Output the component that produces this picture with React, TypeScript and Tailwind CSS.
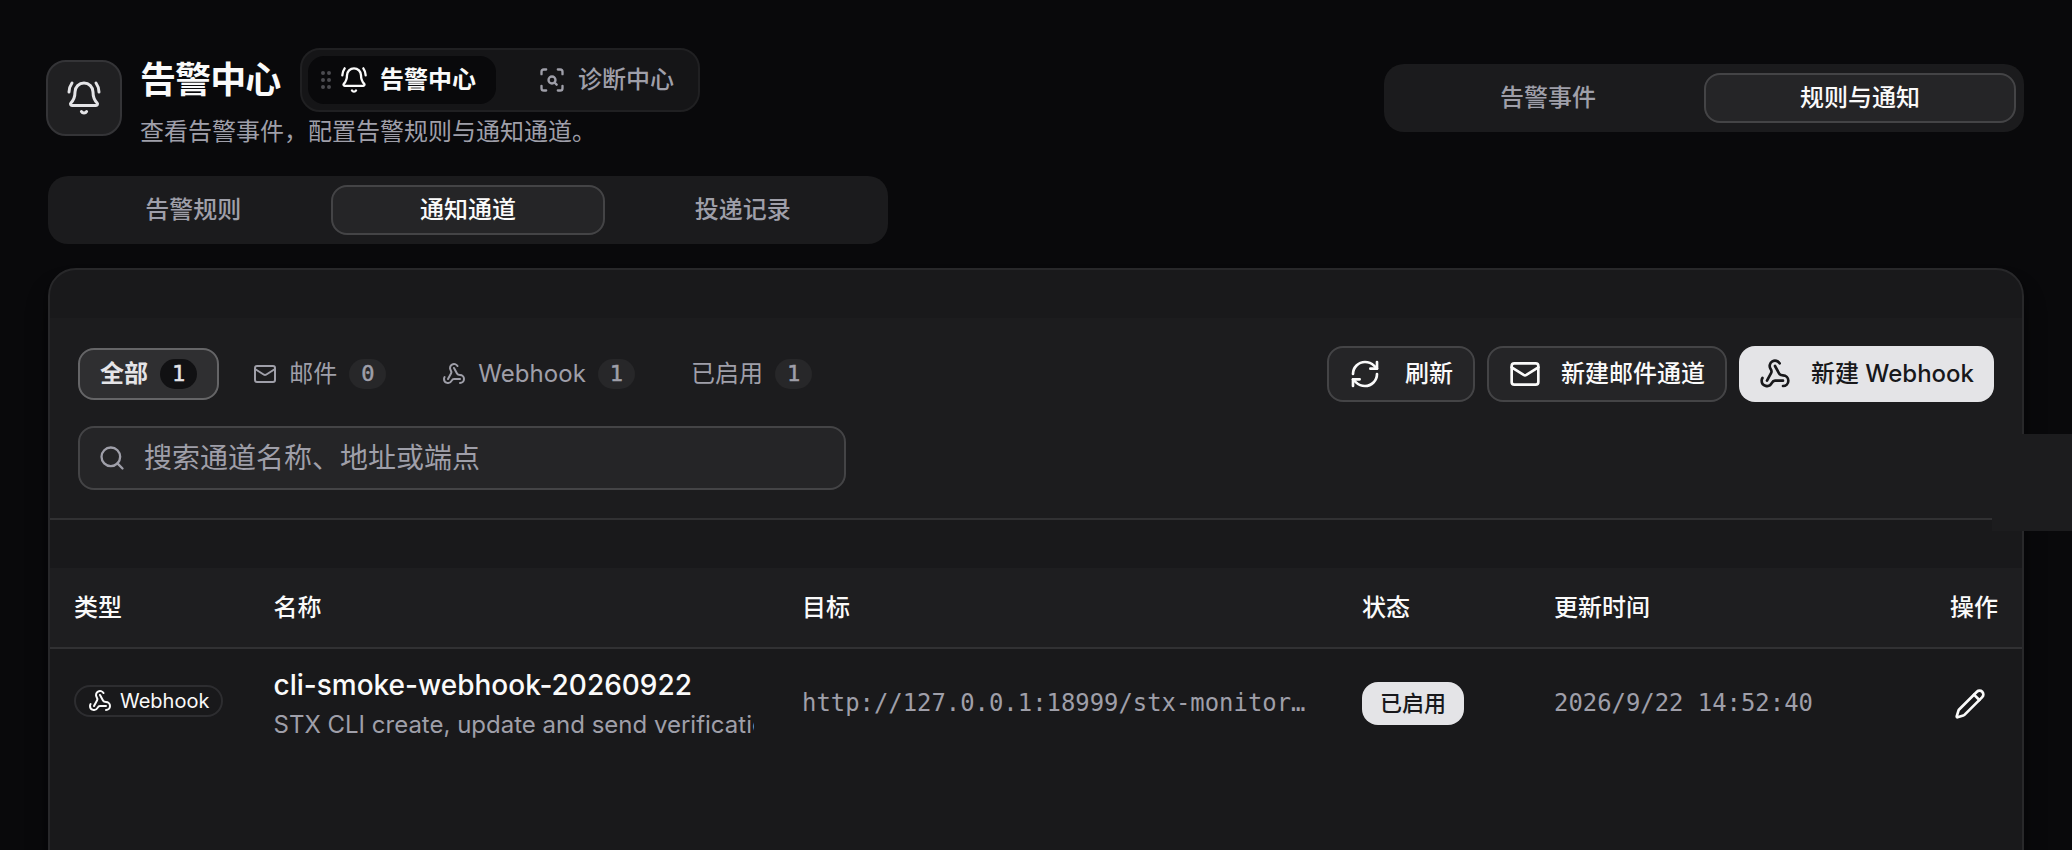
import React from 'react';
import { BellRing, GripVertical, Mail, Pencil, RefreshCw, ScanSearch, Search, Webhook } from 'lucide-react';

const filters = [
  { label: '全部', count: 1, icon: null, active: true },
  { label: '邮件', count: 0, icon: Mail, active: false },
  { label: 'Webhook', count: 1, icon: Webhook, active: false },
  { label: '已启用', count: 1, icon: null, active: false },
];

const channels = [
  {
    type: 'Webhook',
    name: 'cli-smoke-webhook-20260922',
    description: 'STX CLI create, update and send verification',
    target: 'http://127.0.0.1:18999/stx-monitor…',
    status: '已启用',
    updatedAt: '2026/9/22 14:52:40',
  },
];

const TabBar = ({ tabs, active, className }: { tabs: string[]; active: string; className: string }) => (
  <div className={`flex h-[68px] items-center rounded-[20px] bg-[#1b1b1d] px-2 ${className}`}>
    {tabs.map((tab) => (
      <button
        key={tab}
        className={`h-[50px] flex-1 rounded-[16px] border-2 text-[24px] leading-none font-medium ${
          tab === active ? 'border-[#444446] bg-[#252527] text-[#fafafa]' : 'border-transparent text-[#9f9fa9]'
        }`}
      >
        {tab}
      </button>
    ))}
  </div>
);

const Header = () => (
  <header className="flex items-start justify-between pr-12 pl-[46px]">
    <div className="flex">
      <div className="mt-3 flex h-[76px] w-[76px] items-center justify-center rounded-[20px] border-2 border-[#343437] bg-[#202022]">
        <BellRing className="h-9 w-9 text-[#e4e4e7]" />
      </div>
      <div className="ml-[18px]">
        <div className="flex items-center">
          <h1 className="w-[160px] text-[36px] leading-[64px] font-bold tracking-tight text-[#fafafa]">告警中心</h1>
          <div className="flex h-16 w-[400px] items-center rounded-[20px] border-2 border-[#202022] bg-[#151517] p-1.5">
            <button className="flex h-12 items-center rounded-[16px] bg-[#09090b] pr-5 pl-1.5 text-[24px] leading-none font-semibold text-[#fafafa]">
              <GripVertical className="h-6 w-6 text-[#4b4b50]" />
              <BellRing className="ml-0.5 h-7 w-7" />
              <span className="ml-3">告警中心</span>
            </button>
            <button className="flex h-12 items-center pl-[42px] text-[24px] leading-none font-medium text-[#9f9fa9]">
              <ScanSearch className="h-7 w-7" />
              <span className="ml-3">诊断中心</span>
            </button>
          </div>
        </div>
        <p className="mt-0.5 text-[24px] leading-9 text-[#9f9fa9]">查看告警事件，配置告警规则与通知通道。</p>
      </div>
    </div>
    <TabBar tabs={['告警事件', '规则与通知']} active="规则与通知" className="mt-4 w-[640px]" />
  </header>
);

const Toolbar = () => (
  <div className="h-[202px] border-b-2 border-[#313133] bg-[#1c1c1e] px-7 pt-7">
    <div className="flex h-14 items-center justify-between">
      <div className="flex gap-3">
        {filters.map(({ label, count, icon: Icon, active }) => (
          <button
            key={label}
            className={`flex h-[52px] items-center gap-3 rounded-[16px] border-2 px-5 text-[24px] leading-none ${
              active ? 'border-[#656567] bg-[#2f2f31] font-semibold text-[#e4e4e7]' : 'border-transparent text-[#9f9fa9]'
            }`}
          >
            {Icon && <Icon className="h-6 w-6" />}
            <span className="tracking-[0.06px]">{label}</span>
            <span
              className={`flex h-[30px] w-[37px] items-center justify-center rounded-full font-['DejaVu_Sans_Mono',monospace] text-[22px] font-medium [-webkit-text-stroke:0.5px_currentColor] ${
                active ? 'bg-[#111113]' : 'bg-[#272729]'
              }`}
            >
              {count}
            </span>
          </button>
        ))}
      </div>
      <div className="flex gap-3 text-[24px] leading-none font-medium text-[#fafafa]">
        <button className="flex h-14 items-center gap-6 rounded-[16px] border-2 border-[#444446] bg-[#252527] px-5">
          <RefreshCw className="h-8 w-8" />
          刷新
        </button>
        <button className="flex h-14 items-center gap-5 rounded-[16px] border-2 border-[#444446] bg-[#252527] px-5">
          <Mail className="h-8 w-8" />
          新建邮件通道
        </button>
        <button className="flex h-14 items-center gap-5 rounded-[16px] bg-[#e4e4e7] px-5 text-[#18181b]">
          <Webhook className="h-8 w-8" />
          新建 Webhook
        </button>
      </div>
    </div>
    <div className="mt-6 flex h-16 w-[768px] items-center rounded-[16px] border-2 border-[#444446] bg-[#252527] pl-[18px] text-[#9f9fa9]">
      <Search className="h-7 w-7" />
      <span className="ml-[18px] text-[28px] leading-none">搜索通道名称、地址或端点</span>
    </div>
  </div>
);

const ChannelTable = () => (
  <table className="w-full table-fixed text-left">
    <colgroup>
      <col className="w-[199.5px]" />
      <col className="w-[528.5px]" />
      <col className="w-[560px]" />
      <col className="w-[192px]" />
      <col />
      <col className="w-[200px]" />
    </colgroup>
    <thead>
      <tr className="h-[80px] border-b-2 border-[#313133] bg-[#1e1e20] text-[24px] text-[#fafafa]">
        <th className="px-6 font-medium">类型</th>
        <th className="px-6 font-medium">名称</th>
        <th className="px-6 font-medium">目标</th>
        <th className="px-6 font-medium">状态</th>
        <th className="px-6 font-medium">更新时间</th>
        <th className="px-6 text-right font-medium">操作</th>
      </tr>
    </thead>
    <tbody>
      {channels.map((channel) => (
        <tr key={channel.name} className="h-[110px]">
          <td className="px-6 pb-1.5">
            <span className="flex h-8 w-[149px] items-center gap-2 rounded-full border-2 border-[#2d2d30] pl-3 text-[20px] leading-none text-[#fafafa]">
              <Webhook className="h-6 w-6" />
              {channel.type}
            </span>
          </td>
          <td className="px-6">
            <div className="text-[28px] leading-10 font-medium text-[#fafafa]">{channel.name}</div>
            <div className="mt-0.5 overflow-hidden text-[24px] leading-9 whitespace-nowrap text-[#9f9fa9]">
              {channel.description}
            </div>
          </td>
          <td className="px-6 font-['DejaVu_Sans_Mono',monospace] text-[23.9px] whitespace-nowrap text-[#9f9fa9]">
            {channel.target}
          </td>
          <td className="px-6">
            <span className="flex h-[43px] w-[102px] items-center justify-center rounded-[16px] bg-[#e4e4e7] pb-0.5 text-[22px] leading-none font-medium text-[#18181b]">
              {channel.status}
            </span>
          </td>
          <td className="px-6 font-['DejaVu_Sans_Mono',monospace] text-[23.9px] whitespace-nowrap text-[#9f9fa9]">
            {channel.updatedAt}
          </td>
          <td className="pr-9">
            <Pencil className="ml-auto h-8 w-8 text-[#fafafa]" />
          </td>
        </tr>
      ))}
    </tbody>
  </table>
);

export default function App() {
  return (
    <div className="relative h-[850px] overflow-hidden bg-[#09090b] pt-12 font-['Inter','Noto_Sans_CJK_SC',sans-serif]">
      <Header />
      <TabBar tabs={['告警规则', '通知通道', '投递记录']} active="通知通道" className="mt-[26px] ml-12 w-[840px]" />
      <main className="mx-12 mt-6 h-[700px] overflow-hidden rounded-[28px] border-2 border-[#28282a] bg-[#19191b] pt-12 shadow-xl shadow-black/60">
        <Toolbar />
        <div className="pt-12">
          <ChannelTable />
        </div>
      </main>
      {/* Collapsed side drawer, sits over the panel edge */}
      <div className="absolute top-[434px] right-0 h-[97px] w-20 bg-[#1c1c1e]" />
    </div>
  );
}
